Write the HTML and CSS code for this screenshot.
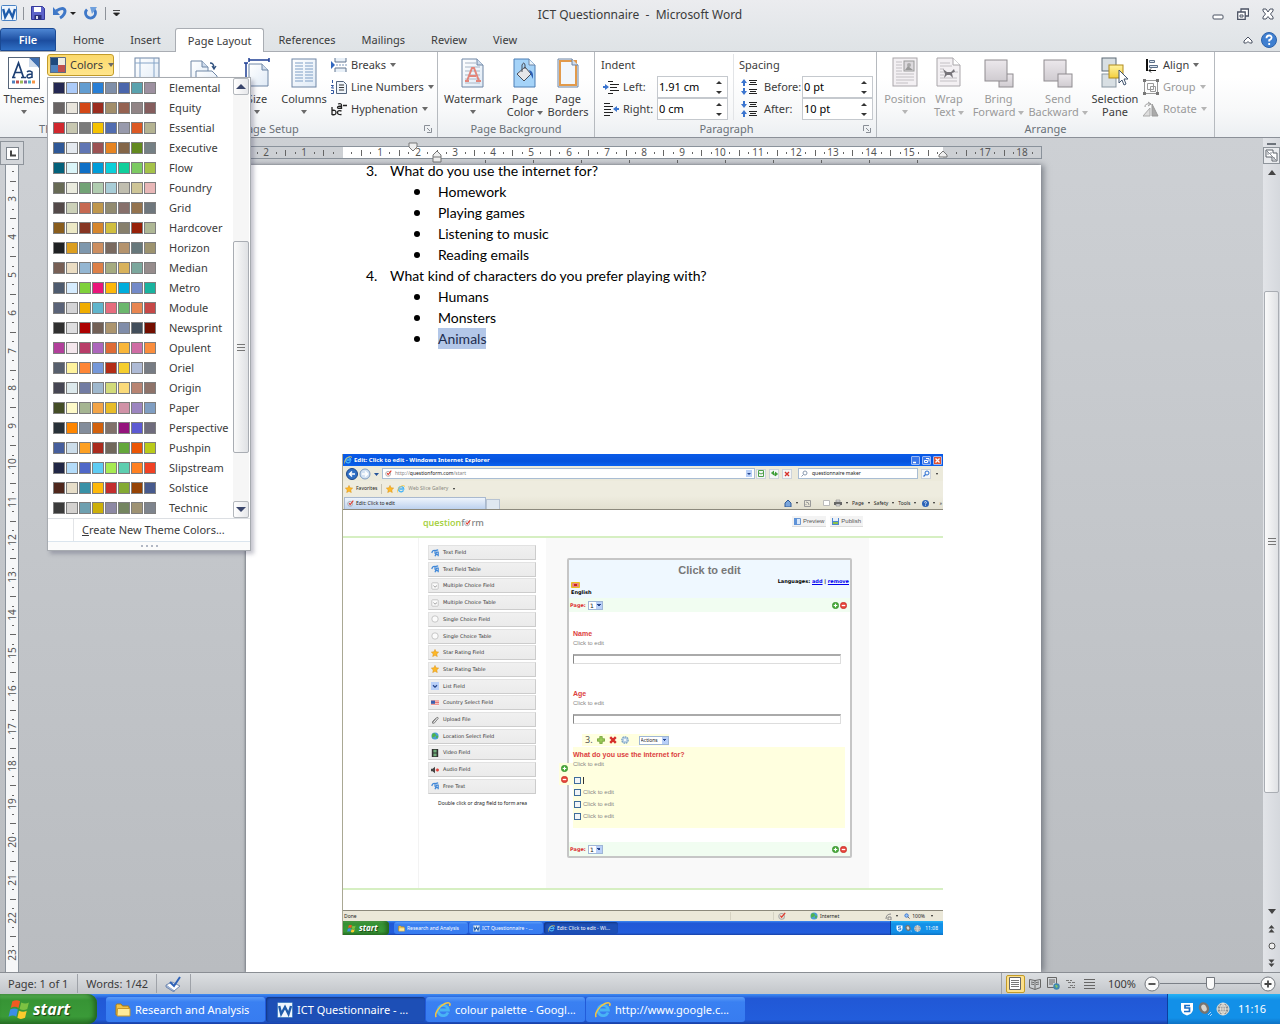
FILE: index.html
```html
<!DOCTYPE html>
<html lang="en">
<head>
<meta charset="utf-8">
<title>ICT Questionnaire - Microsoft Word</title>
<link rel="stylesheet" href="styles.css">
</head>
<body>
<svg class="defs" aria-hidden="true">
  <defs>
    <linearGradient id="pg" x1="0" y1="0" x2="1" y2="1"><stop offset="0" stop-color="#fff"/><stop offset="1" stop-color="#dfeaf6"/></linearGradient>
    <linearGradient id="gg" x1="0" y1="0" x2="0" y2="1"><stop offset="0" stop-color="#ece8ec"/><stop offset="1" stop-color="#cfcbd0"/></linearGradient>
    <linearGradient id="yg" x1="0" y1="0" x2="0" y2="1"><stop offset="0" stop-color="#fff3a0"/><stop offset="1" stop-color="#f4cf3e"/></linearGradient>
    <symbol id="ie" viewBox="0 0 16 16"><path d="M13 10.500A5.200 5.200 0 1 1 13.400 8H5" fill="none" stroke="#49b4f5" stroke-width="2.800"/><path d="M1.200 15C-1 12 4 4 10 1.500C14 0 16 1 14.500 4" fill="none" stroke="#f5c542" stroke-width="1.500"/></symbol>
    <symbol id="folder" viewBox="0 0 16 16"><path d="M1 3.500q0-1.500 1.500-1.500H6l1.500 2H13q1 0 1 1v8H1z" fill="#f0c34a" stroke="#a87a14"/><path d="M2.500 6.500h12.500v7.500H2z" fill="#ffeb9a" stroke="#c6982c"/></symbol>
    <symbol id="word" viewBox="0 0 16 16"><rect x=".5" y=".5" width="15" height="15" rx="1" fill="#eef5fd" stroke="#4b83c4"/><path d="M2.200 4l2 8L8 5l3.500 7 2.500-8" fill="none" stroke="#1f5cab" stroke-width="2.400"/></symbol>
    <symbol id="flag" viewBox="0 0 20 20"><path d="M4 3q4-2 7 0L9.500 9Q6 7 2.500 9z" fill="#f25a22"/><path d="M12 4q4 2 7 0l-1.500 6q-3.500 2-7 0z" fill="#7cc142"/><path d="M2 10.500q4-2 7 0L7.500 17q-3-2-7 0z" fill="#3b8ee8"/><path d="M10 11.500q4 2 7 0L15.500 18q-4 2-7 0z" fill="#fbcb2d"/></symbol>
    <symbol id="add" viewBox="0 0 10 10"><circle cx="5" cy="5" r="4.500" fill="#4caf3e" stroke="#3a8a30"/><path d="M5 2.500v5M2.500 5h5" stroke="#fff" stroke-width="1.600"/></symbol>
    <symbol id="del" viewBox="0 0 10 10"><circle cx="5" cy="5" r="4.500" fill="#e8453c" stroke="#c23028"/><path d="M2.500 5h5" stroke="#fff" stroke-width="1.800"/></symbol>
    <symbol id="star" viewBox="0 0 10 10"><path d="M5 .5l1.400 3 3.200.4-2.400 2.300.7 3.300L5 7.900 2.100 9.500l.7-3.300L.4 3.900l3.200-.4z" fill="#fdb827" stroke="#d98f13" stroke-width=".6"/></symbol>
    <symbol id="textf" viewBox="0 0 10 10"><path d="M1 5q1-4 4-3v4M5 2l4-1M5 9l2-5h2v5M6 7h3" fill="none" stroke="#3f87d8" stroke-width="1.500"/></symbol>
    <symbol id="chk" viewBox="0 0 10 10"><rect x="1" y="1" width="8" height="8" rx="1" fill="#fbfbfb" stroke="#bbb"/><path d="M3 4.500l2 2 2.500-2" fill="none" stroke="#888"/></symbol>
    <symbol id="rad" viewBox="0 0 10 10"><circle cx="5" cy="5" r="4" fill="#fbfbfb" stroke="#bbb"/></symbol>
    <symbol id="globe" viewBox="0 0 10 10"><circle cx="5" cy="5" r="4.500" fill="#4a9fd8"/><path d="M2 2q3-1 4 1T4 6 3 9Q0 6 2 2zM7 4l2 1-1 3-2-1z" fill="#4fb34a"/></symbol>
    <symbol id="qf" viewBox="0 0 10 10"><circle cx="4.500" cy="5.500" r="3.500" fill="none" stroke="#aaa" stroke-width="1.300"/><path d="M3 4.500l1.500 2L9 1" fill="none" stroke="#e03a2f" stroke-width="1.500"/></symbol>
    <symbol id="shield" viewBox="0 0 14 14"><path d="M1 1h12v7q-1 4-6 5.500Q2 12 1 8z" fill="#fff"/><path d="M10 3.500H5V6h4.500v3.500H4" fill="none" stroke="#1b6fc8" stroke-width="1.700"/></symbol>
    <symbol id="speaker" viewBox="0 0 14 14"><ellipse cx="6" cy="6" rx="5" ry="6" fill="#77746f" transform="rotate(-25 6 6)"/><ellipse cx="6" cy="6" rx="2.500" ry="3.500" fill="#d9d6cf" transform="rotate(-25 6 6)"/><path d="M10 13l3-3M12 14l2-2" stroke="#a6d2ff"/></symbol>
    <symbol id="net" viewBox="0 0 14 14"><circle cx="7" cy="7" r="6" fill="#8b8f92" stroke="#e6e3da"/><path d="M1 7h12M7 1v12M2.500 4h9M2.500 10h9M7 1q-5 6 0 12M7 1q5 6 0 12" fill="none" stroke="#e6e3da"/></symbol>
  </defs>
</svg>

<header class="titlebar">
  <div class="qat">
    <svg width="16" height="16" role="img" aria-label="Word"><use href="#word"/></svg>
    <i class="qat-line"></i>
    <button aria-label="Save"><svg width="14" height="14" viewBox="0 0 14 14"><path d="M.5.5h11l2 2v11H.5z" fill="#5c62c9" stroke="#34389a"/><path d="M3 1h7v5H3z" fill="#fff"/><path d="M3.500 9h7v4.500h-7z" fill="#2a2e78"/><path d="M5 10h2v3H5z" fill="#dde"/></svg></button>
    <button aria-label="Undo"><svg width="23" height="15" viewBox="0 0 23 15"><path d="M3 5q8-5 9 0 0 4-5 7" fill="none" stroke="#3f78c8" stroke-width="3"/><path d="M0 1v8h7z" fill="#3f78c8"/><path d="M17 6h6l-3 3z" fill="#222"/></svg></button>
    <button aria-label="Redo"><svg width="14" height="15" viewBox="0 0 14 15"><path d="M3 3.500a5 5 0 1 0 7 0" fill="none" stroke="#3f78c8" stroke-width="2.800"/><path d="M6 1h7l-5 7z" fill="#6fa0dd"/></svg></button>
    <i class="qat-line"></i>
    <button aria-label="Customize"><svg width="7" height="7" viewBox="0 0 7 7"><path d="M0 .5h7M.5 3h6L3.500 6z" fill="#222" stroke="#222" stroke-width=".8"/></svg></button>
  </div>
  <h1>ICT Questionnaire&nbsp; -&nbsp; Microsoft Word</h1>
  <div class="winbtns">
    <button aria-label="Minimize"><svg width="12" height="12" viewBox="0 0 12 12"><rect x="1" y="7" width="10" height="4" rx="1" fill="#fff" stroke="#4b5263"/></svg></button>
    <button aria-label="Restore"><svg width="12" height="12" viewBox="0 0 12 12"><path d="M4 1h7.500v7H4z" fill="#fff" stroke="#4b5263" stroke-width="1.300"/><path d="M.7 4h7.500v7.300H.7z" fill="#fff" stroke="#4b5263" stroke-width="1.300"/><path d="M3 7h3v2H3z" fill="none" stroke="#4b5263"/></svg></button>
    <button aria-label="Close"><svg width="12" height="12" viewBox="0 0 12 12"><path d="M1 1h3l2 3 2-3h3v2L8.500 6 11 9v2H8L6 8.500 4 11H1V9l2.500-3L1 3z" fill="#fff" stroke="#4b5263"/></svg></button>
  </div>
</header>

<nav class="tabs">
  <button class="file">File</button>
  <button>Home</button>
  <button>Insert</button>
  <button class="on">Page Layout</button>
  <button>References</button>
  <button>Mailings</button>
  <button>Review</button>
  <button>View</button>
  <div class="help">
    <button aria-label="Minimize the Ribbon"><svg width="10" height="8" viewBox="0 0 10 8"><path d="M1 5l4-4 4 4v2H6.500L5 5.500 3.500 7H1z" fill="#fff" stroke="#4b5263"/></svg></button>
    <button aria-label="Help"><svg width="16" height="16" viewBox="0 0 16 16"><circle cx="8" cy="8" r="7.500" fill="#3f7fd0" stroke="#2c62aa"/><path d="M5.500 6.200q0-2.700 2.600-2.700t2.500 2.300Q10.500 7.200 8.200 8.200V9.500M8.200 11v2" fill="none" stroke="#fff" stroke-width="1.800"/></svg></button>
  </div>
</nav>

<section class="ribbon">
  <div class="group themes">
    <div class="tools">
      <button class="big"><svg width="32" height="32" viewBox="0 0 32 32"><rect x=".5" y=".5" width="31" height="31" fill="#fff" stroke="#566579"/><path d="M21 1h10v10z" fill="#3f6fb0"/><path d="M21 1v9h9z" fill="#cfdcec"/><path d="M5 20.500L10.500 6l5 14.500M7 15.500h7M4 20.500h3.500M13 20.500h5" fill="none" stroke="#1d3f73" stroke-width="1.700"/><path d="M19 15q2-2 5 0v6M24 17q-5 0-5 2.500t5 .5" fill="none" stroke="#1d3f73" stroke-width="1.500"/><path d="M4 23.500h3v3H4z" fill="#4f81bd"/><path d="M8 23.500h3v3H8z" fill="#c0504d"/><path d="M12 23.500h3v3h-3z" fill="#9bbb59"/><path d="M16 23.500h3v3h-3z" fill="#8064a2"/><path d="M20 23.500h3v3h-3z" fill="#4bacc6"/><path d="M24 23.500h3v3h-3z" fill="#f79646"/></svg><span>Themes</span><i class="dd"></i></button>
      <div class="colors-wrap">
        <button class="colors" aria-expanded="true"><svg width="16" height="16" viewBox="0 0 16 16"><path d="M0 0h8v8H0z" fill="#1f497d"/><path d="M8 0h8v8H8z" fill="#eeece1"/><path d="M0 8h8v8H0z" fill="#4f81bd"/><path d="M8 8h8v8H8z" fill="#c0504d"/><path d="M.5.5h15v15H.500z" fill="none" stroke="#5d6c82"/></svg><span>Colors</span><i class="dd"></i></button>
        <div class="menu">
          <div class="menu-main">
            <ul id="schemes"></ul>
            <div class="menu-scroll">
              <button aria-label="Scroll up"><i class="tri-up"></i></button>
              <div class="menu-thumb"><i></i><i></i><i></i></div>
              <button aria-label="Scroll down"><i class="tri-down"></i></button>
            </div>
          </div>
          <button class="create"><span><u>C</u>reate New Theme Colors...</span></button>
          <div class="grip"><i></i><i></i><i></i><i></i></div>
        </div>
      </div>
    </div>
    <h2>Themes</h2>
  </div>

  <div class="group setup">
    <div class="tools">
      <button class="big w44" aria-label="Margins"><svg width="26" height="32" viewBox="0 0 26 32"><rect x="1" y="1" width="24" height="30" fill="url(#pg)" stroke="#6f86a5"/><path d="M6 1v30M20 1v30M1 6h24M1 26h24" stroke="#86a5c8"/></svg></button>
      <button class="big w66" aria-label="Orientation"><svg width="32" height="32" viewBox="0 0 32 32"><path d="M5 4h11l6 6v20H5z" fill="url(#pg)" stroke="#6f86a5"/><path d="M16 4v6h6" fill="#cfdcec" stroke="#6f86a5"/><path d="M10 14h16l5 5v12H10z" fill="url(#pg)" stroke="#6f86a5"/><path d="M24 6q4 0 4 5M26 9l2 3 2-3" fill="none" stroke="#30517f" stroke-width="1.300"/></svg></button>
      <button class="big w44"><svg width="26" height="32" viewBox="0 0 26 32"><path d="M5 7h13l6 6v16H5z" fill="url(#pg)" stroke="#6f86a5"/><path d="M18 7v6h6" fill="#cfdcec" stroke="#6f86a5"/><path d="M5 3h20M5 1v4M25 1v4M2 6v23M0 6h4" stroke="#1f3f94" stroke-width="1.500"/></svg><span>Size</span><i class="dd"></i></button>
      <button class="big w50"><svg width="26" height="32" viewBox="0 0 26 32"><rect x="1" y="2" width="24" height="28" fill="url(#pg)" stroke="#6f86a5"/><path d="M4 6h8M4 9h8M4 12h8M4 15h8M4 18h8M4 21h8M4 24h8M14 6h8M14 9h8M14 12h8M14 15h8M14 18h8M14 21h8M14 24h8" stroke="#7f9fc6"/></svg><span>Columns</span><i class="dd"></i></button>
      <div class="stack">
        <button><svg width="16" height="16" viewBox="0 0 16 16"><path d="M4 1v4h11V1M4 15v-4h11v4" fill="#e8f0f8" stroke="#60758f"/><path d="M5 8h11" stroke="#7d97ba" stroke-dasharray="2 1"/><path d="M0 4l4 4-4 4z" fill="#2f66bf"/></svg><span>Breaks</span><i class="dd"></i></button>
        <button><svg width="16" height="16" viewBox="0 0 16 16"><path d="M5.500 2.500h7l3 3v9h-10z" fill="#eef4fa" stroke="#51637b"/><path d="M8 6h5M8 8.500h5M8 11h5" stroke="#333"/><path d="M1.500 1v3M0 6.500h2.500L.5 9H3M0 11.500h2.500v3H0" fill="none" stroke="#2f56a0"/></svg><span>Line Numbers</span><i class="dd"></i></button>
        <button><svg width="16" height="16" viewBox="0 0 16 16"><path d="M1 6v8M1 9.500q4-1 4 2t-4 2M10.500 10q-4-1-4 1.500t4 2M7 3q3.500-1 3.500 1v4M10.500 5q-4 0-4 1.500t4 .5M12 4.500h4" fill="none" stroke="#222" stroke-width="1.300"/></svg><span>Hyphenation</span><i class="dd"></i></button>
      </div>
    </div>
    <h2>Page Setup</h2><button class="launch" aria-label="Page Setup options"><svg width="8" height="8" viewBox="0 0 8 8"><path d="M.5 6V.5H6M3 3l3 3M7.500 3v4.500H3" fill="none" stroke="#8a8f97"/></svg></button>
  </div>

  <div class="group bg">
    <div class="tools">
      <button class="big w60"><svg width="24" height="32" viewBox="0 0 24 32"><path d="M1 2h15l6 6v22H1z" fill="url(#pg)" stroke="#6f86a5"/><path d="M4 6h11M4 10h15M4 14h15M4 18h15M4 22h15M4 26h15" stroke="#a9b6c6"/><path d="M6 24l5-13h2l5 13M8 19h7M4 24h4M15 24h5" fill="none" stroke="#e2857a" stroke-width="2"/><path d="M16 2v6h6" fill="#cfdcec" stroke="#6f86a5"/></svg><span>Watermark</span><i class="dd"></i></button>
      <button class="big w44"><svg width="24" height="32" viewBox="0 0 24 32"><path d="M1 2h15l6 6v22H1z" fill="#a5d3f8" stroke="#4d7fb5"/><path d="M16 2v6h6" fill="#eaf3fb" stroke="#6f86a5"/><path d="M4 17l8-7 6 7-7 7z" fill="#e6e6e8" stroke="#4b4f58"/><path d="M9 15V8q2-4 3 0v4" fill="none" stroke="#4b4f58"/><path d="M16 13q5 1 4 9l-2-4z" fill="#2c5fb5"/></svg><span>Page<br>Color <i class="dd"></i></span></button>
      <button class="big w42"><svg width="24" height="32" viewBox="0 0 24 32"><path d="M2 2h14l6 6v22H2z" fill="#f2f7fc" stroke="#6f86a5"/><path d="M4 4h16v24H4z" fill="none" stroke="#e29a4b" stroke-width="2"/><path d="M16 2v6h6" fill="#cfdcec" stroke="#6f86a5"/></svg><span>Page<br>Borders</span></button>
    </div>
    <h2>Page Background</h2>
  </div>

  <div class="group para">
    <div class="tools">
      <div class="fields">
        <h3>Indent</h3>
        <svg width="16" height="16" viewBox="0 0 16 16"><path d="M5 2.500h5M7 5.500h9M7 8.500h7M7 11.500h9M5 14.500h5" stroke="#222"/><path d="M0 7h2V5l4 3-4 3V9H0z" fill="#3a74cf"/></svg>
        <label for="il">Left:</label><span class="spin"><input id="il" value="1.91 cm"><i class="ud"></i></span>
        <svg width="16" height="16" viewBox="0 0 16 16"><path d="M1 2.500h6M1 5.500h9M1 8.500h7M1 11.500h9M1 14.500h6" stroke="#222"/><path d="M16 7h-2V5l-4 3 4 3V9h2z" fill="#3a74cf"/></svg>
        <label for="ir">Right:</label><span class="spin"><input id="ir" value="0 cm"><i class="ud"></i></span>
      </div>
      <div class="fields sp">
        <h3>Spacing</h3>
        <svg width="16" height="16" viewBox="0 0 16 16"><path d="M8 1.500h8M9 3.500h6M8 5.500h8M8 10.500h8M9 12.500h6M8 14.500h8" stroke="#222"/><path d="M3 0l3 4H4v3H2V4H0zM3 16l3-4H4V9H2v3H0z" fill="#3a74cf"/></svg>
        <label for="sb">Before:</label><span class="spin"><input id="sb" value="0 pt"><i class="ud"></i></span>
        <svg width="16" height="16" viewBox="0 0 16 16"><path d="M8 1.500h8M9 3.500h6M8 5.500h8M8 10.500h8M9 12.500h6M8 14.500h8" stroke="#222"/><path d="M3 7l3-4H4V0H2v3H0zM3 9l3 4H4v3H2v-3H0z" fill="#3a74cf"/></svg>
        <label for="sa">After:</label><span class="spin"><input id="sa" value="10 pt"><i class="ud"></i></span>
      </div>
    </div>
    <h2>Paragraph</h2><button class="launch" aria-label="Paragraph options"><svg width="8" height="8" viewBox="0 0 8 8"><path d="M.5 6V.5H6M3 3l3 3M7.500 3v4.500H3" fill="none" stroke="#8a8f97"/></svg></button>
  </div>

  <div class="group arrange">
    <div class="tools">
      <button class="big off w46"><svg width="26" height="32" viewBox="0 0 26 32"><rect x="1" y="1" width="24" height="28" fill="#f3f0f3" stroke="#a9a6aa"/><path d="M4 5h6M4 8h6M4 11h6M4 14h6M4 17h18M4 20h18M4 23h18M4 26h12" stroke="#c3c0c4"/><rect x="12" y="4" width="10" height="10" fill="#dcd9dd" stroke="#999"/><circle cx="17" cy="8" r="2" fill="#aaa"/><path d="M13 13l3-4 5 4" fill="#999"/></svg><span>Position</span><i class="dd"></i></button>
      <button class="big off w42"><svg width="26" height="32" viewBox="0 0 26 32"><path d="M1 1h16l7 7v21H1z" fill="#f3f0f3" stroke="#a9a6aa"/><path d="M17 1v7h7" fill="#fff" stroke="#a9a6aa"/><path d="M4 6h10M4 9h12M4 12h4M4 15h4M4 18h4M4 21h17M4 24h17M19 15h3" stroke="#c3c0c4"/><path d="M7 12l4 3h4l3-3 1 3-3 1 1 5-3-3h-3l-3 3 1-4z" fill="#77747a"/></svg><span>Wrap<br>Text <i class="dd"></i></span></button>
      <button class="big off w57"><svg width="30" height="32" viewBox="0 0 30 32"><rect x="15" y="17" width="14" height="13" fill="url(#gg)" stroke="#8f8c90"/><rect x="1" y="3" width="22" height="21" fill="url(#gg)" stroke="#8f8c90"/></svg><span>Bring<br>Forward <i class="dd"></i></span></button>
      <button class="big off w62"><svg width="30" height="32" viewBox="0 0 30 32"><rect x="1" y="3" width="22" height="21" fill="url(#gg)" stroke="#8f8c90"/><rect x="15" y="17" width="14" height="13" fill="url(#gg)" stroke="#8f8c90"/></svg><span>Send<br>Backward <i class="dd"></i></span></button>
      <button class="big w52"><svg width="28" height="32" viewBox="0 0 28 32"><rect x="1" y="1" width="14" height="13" fill="#d8dfe3" stroke="#5c6a76"/><rect x="1" y="17" width="14" height="13" fill="#d8dfe3" stroke="#8a97a2"/><rect x="8" y="8" width="14" height="13" fill="url(#yg)" stroke="#b08a1c"/><path d="M18 13v13l3-3 2 5 2-1-2-5h4z" fill="#fff" stroke="#41556f"/></svg><span>Selection<br>Pane</span></button>
      <div class="stack">
        <button><svg width="16" height="16" viewBox="0 0 16 16"><path d="M4 2v12" stroke="#111" stroke-width="2"/><path d="M6.500 3.500h5v2h-5zM6.500 8.500h8v2h-8z" fill="#dbe6f2" stroke="#5b6e88"/><path d="M6 13.500h7M6 13.500l2-2M6 13.500l2 2" stroke="#111"/></svg><span>Align</span><i class="dd"></i></button>
        <button class="off"><svg width="16" height="16" viewBox="0 0 16 16"><path d="M1.500 1.500h13v13h-13zM4.500 4.500h6v6h-6zM7.500 7.500h5v5h-5z" fill="none" stroke="#999"/><path d="M0 0h3v3H0zM13 0h3v3h-3zM0 13h3v3H0zM13 13h3v3h-3z" fill="#777"/></svg><span>Group</span><i class="dd"></i></button>
        <button class="off"><svg width="16" height="16" viewBox="0 0 16 16"><path d="M0 15h7V7z" fill="#ddd" stroke="#aaa"/><path d="M9 15V3l6 12z" fill="#aaa" stroke="#999"/><path d="M2 6q0-4 5-3M5 1l3 2-3 2" fill="none" stroke="#999"/></svg><span>Rotate</span><i class="dd"></i></button>
      </div>
    </div>
    <h2>Arrange</h2>
  </div>
</section>

<main class="work">
  <div class="left">
    <button class="tabsel" aria-label="Left tab"><svg width="13" height="13" viewBox="0 0 13 13"><rect x=".5" y=".5" width="12" height="12" fill="#fff" stroke="#7d848c"/><path d="M5 3.500v5h5" fill="none" stroke="#444" stroke-width="2"/></svg></button>
    <div class="vruler" id="vruler"></div>
  </div>
  <div class="center">
    <div class="hruler" id="hruler"></div>
    <article class="page">
      <ol class="doc">
        <li><div class="q"><span class="n">3.</span><span>What do you use the internet for?</span></div>
          <ul><li>Homework</li><li>Playing games</li><li>Listening to music</li><li>Reading emails</li></ul></li>
        <li><div class="q"><span class="n">4.</span><span>What kind of characters do you prefer playing with?</span></div>
          <ul><li>Humans</li><li>Monsters</li><li><mark>Animals</mark></li></ul></li>
      </ol>

      <figure class="shot">
        <div class="ie-title"><svg width="8" height="8"><use href="#ie"/></svg><b>Edit: Click to edit - Windows Internet Explorer</b>
          <button aria-label="Minimize"><svg width="7" height="7" viewBox="0 0 7 7"><path d="M1 5.500h3" stroke="#fff" stroke-width="1.500"/></svg></button><button aria-label="Restore"><svg width="7" height="7" viewBox="0 0 7 7"><path d="M3 1.500h3v3M1.500 3.500h3v2h-3z" fill="none" stroke="#fff"/></svg></button><button class="x" aria-label="Close"><svg width="7" height="7" viewBox="0 0 7 7"><path d="M1.500 1.500l4 4M5.500 1.500l-4 4" stroke="#fff" stroke-width="1.300"/></svg></button></div>
        <div class="ie-addr">
          <svg width="34" height="14" viewBox="0 0 34 14"><circle cx="7" cy="7" r="5.500" fill="#2f6fc4" stroke="#1c4688"/><path d="M10 7H4.500M7 4.500L4.500 7 7 9.500" fill="none" stroke="#fff" stroke-width="1.500"/><circle cx="20" cy="7" r="5" fill="#d3e2f2" stroke="#7f9cc0"/><path d="M17 7h5.500M20 4.500L22.500 7 20 9.500" fill="none" stroke="#fff" stroke-width="1.500"/><path d="M29 6h5l-2.500 3z" fill="#24539b"/></svg>
          <div class="url"><svg width="7" height="7"><use href="#qf"/></svg><span>http://<b>questionform.com</b>/start</span><i class="mini-dd"></i></div>
          <button aria-label="Compatibility"><svg width="6" height="7" viewBox="0 0 6 7"><path d="M.5.5h5v6h-5zM1 3l2 1 2-1" fill="none" stroke="#4fa04a"/></svg></button>
          <button aria-label="Refresh"><svg width="7" height="7" viewBox="0 0 7 7"><path d="M3 1L.500 3 3 5V3M4 2l2.500 2L4 6V4" fill="#3b9c35" stroke="#3b9c35"/></svg></button>
          <button aria-label="Stop"><svg width="6" height="6" viewBox="0 0 6 6"><path d="M1 1l4 4M5 1L1 5" stroke="#d8322a" stroke-width="1.400"/></svg></button>
          <div class="search"><svg width="7" height="7" viewBox="0 0 7 7"><circle cx="4" cy="3" r="2" fill="none" stroke="#8b9bb0"/><path d="M2.500 4.500L.5 6.500" stroke="#8b9bb0"/></svg><span>questionnaire maker</span></div>
          <button aria-label="Search"><svg width="7" height="7" viewBox="0 0 7 7"><circle cx="4" cy="3" r="2" fill="none" stroke="#2d6fd2"/><path d="M2.500 4.500L.5 6.500" stroke="#2d6fd2" stroke-width="1.300"/></svg></button>
          <i class="mini-tri"></i>
        </div>
        <div class="ie-fav"><svg width="8" height="8"><use href="#star"/></svg><span>Favorites</span><i class="vl"></i><svg width="8" height="8"><use href="#star"/></svg><svg width="8" height="8"><use href="#ie"/></svg><span class="dim">Web Slice Gallery</span><i class="mini-tri"></i></div>
        <div class="ie-tabs"><div class="ie-tab"><svg width="7" height="7"><use href="#qf"/></svg><span>Edit: Click to edit</span></div><div class="ie-newtab"></div>
          <div class="ie-cmds">
            <svg width="8" height="8" viewBox="0 0 8 8"><path d="M1 4l3-3 3 3v4H1z" fill="#7aa5dc" stroke="#315b95"/></svg><i class="mini-tri"></i>
            <svg width="7" height="7" viewBox="0 0 7 7"><path d="M.5.5h6v6h-6zM2 5V4M2 2q3 0 3 3" fill="none" stroke="#999"/></svg><i class="gap"></i>
            <svg width="7" height="6" viewBox="0 0 7 6"><path d="M.5.5h6v5h-6z" fill="#fff" stroke="#bbb"/></svg>
            <svg width="8" height="8" viewBox="0 0 8 8"><path d="M0 3h8v3H0z" fill="#666"/><path d="M2 1h4v2H2zM2 5h4v2H2z" fill="#ddd" stroke="#777" stroke-width=".5"/></svg><i class="mini-tri"></i>
            <span>Page</span><i class="mini-tri"></i><span>Safety</span><i class="mini-tri"></i><span>Tools</span><i class="mini-tri"></i>
            <svg width="7" height="7" viewBox="0 0 16 16"><circle cx="8" cy="8" r="8" fill="#2a62b8"/><path d="M6 6q0-3 2-2.500t2 2T8 9v1M8 11v2" fill="none" stroke="#fff" stroke-width="1.800"/></svg><i class="mini-tri"></i><span>»</span>
          </div></div>

        <div class="site-head">
          <div class="logo"><span>question</span><b>f</b><svg width="7" height="8" viewBox="0 0 10 10"><use href="#qf"/></svg><b>rm</b></div>
          <div class="site-btns"><button><svg width="7" height="7" viewBox="0 0 7 7"><path d="M.5.500h6v6h-6z" fill="#dbe9fa" stroke="#6f9ad3"/><path d="M0 0h3v7H0z" fill="#5f93d8"/></svg>Preview</button><button><svg width="7" height="7" viewBox="0 0 7 7"><path d="M0 0h7v7H0z" fill="#4d86d0"/><path d="M1 0h5v3H1z" fill="#e8f0fa"/><path d="M1 4h5v2H1z" fill="#8bc34a"/></svg>Publish</button></div>
        </div>
        <div class="site-body">
          <aside class="palette">
            <div class="pal-list">
              <button><svg><use href="#textf"/></svg>Text Field</button>
              <button><svg><use href="#textf"/></svg>Text Field Table</button>
              <button><svg><use href="#chk"/></svg>Multiple Choice Field</button>
              <button><svg><use href="#chk"/></svg>Multiple Choice Table</button>
              <button><svg><use href="#rad"/></svg>Single Choice Field</button>
              <button><svg><use href="#rad"/></svg>Single Choice Table</button>
              <button><svg><use href="#star"/></svg>Star Rating Field</button>
              <button><svg><use href="#star"/></svg>Star Rating Table</button>
              <button><svg viewBox="0 0 10 10"><path d="M0 0h10v10H0z" fill="#b9d0f8"/><path d="M2.500 4L5 6.500 7.500 4" fill="none" stroke="#27468c" stroke-width="1.600"/></svg>List Field</button>
              <button><svg viewBox="0 0 10 10"><path d="M0 2h10v6H0z" fill="#fff"/><path d="M0 2.500h10M0 4.500h10M0 6.500h10" stroke="#e0443c"/><path d="M0 2h5v4H0z" fill="#3c5fae"/></svg>Country Select Field</button>
              <button><svg viewBox="0 0 10 10"><path d="M2 8l5-6q2-1 2 1L4 9q-3 1-2-2l4-4" fill="none" stroke="#666"/></svg>Upload File</button>
              <button><svg><use href="#globe"/></svg>Location Select Field</button>
              <button><svg viewBox="0 0 10 10"><path d="M1 0h8v10H1z" fill="#333"/><path d="M3 1h4v3.500H3zM3 5.500h4V9H3z" fill="#6fae7a"/></svg>Video Field</button>
              <button><svg viewBox="0 0 10 10"><path d="M0 3.500h2L5 1v8L2 6.500H0z" fill="#444"/><path d="M6 5h4M8 3v4" stroke="#e0443c" stroke-width="2"/></svg>Audio Field</button>
              <button><svg><use href="#textf"/></svg>Free Text</button>
            </div>
            <p>Double click or drag field to form area</p>
          </aside>
          <div class="canvas">
            <div class="form">
              <div class="f-head"><h4>Click to edit</h4><p class="lang">Languages: <a href="#add">add</a> | <a href="#remove">remove</a></p>
                <div class="eng"><svg width="9" height="6" viewBox="0 0 9 6"><path d="M.5.5h8v5h-8z" fill="#e88a7a" stroke="#e8c21c"/><path d="M3 2h3v2H3z" fill="#c22"/></svg><b>English</b></div></div>
              <div class="f-page"><label for="p1">Page:</label><select id="p1"><option>1</option></select><svg><use href="#add"/></svg><svg><use href="#del"/></svg></div>
              <div class="f-field"><label for="fn">Name</label><small>Click to edit</small><input id="fn"></div>
              <div class="f-field"><label for="fa">Age</label><small>Click to edit</small><input id="fa"></div>
              <div class="f-bar"><b>3.</b>
                <svg viewBox="0 0 10 10"><path d="M3.500.5h3v3h3v3h-3v3h-3v-3h-3v-3h3z" fill="#9ccb5a" stroke="#6a9c30"/></svg>
                <svg viewBox="0 0 10 10"><path d="M1.500 1.500l7 7M8.500 1.500l-7 7" stroke="#d62f2a" stroke-width="3"/></svg>
                <svg viewBox="0 0 10 10"><circle cx="5" cy="5" r="4" fill="#b8d0e4" stroke="#7ba2c2" stroke-width="1.600" stroke-dasharray="2 1"/><circle cx="5" cy="5" r="1.400" fill="#fff"/></svg>
                <select aria-label="Actions"><option>Actions</option></select></div>
              <div class="f-q">
                <div class="pm"><svg><use href="#add"/></svg><svg><use href="#del"/></svg></div>
                <h5>What do you use the internet for?</h5><small>Click to edit</small>
                <label class="o"><input type="checkbox"><i class="caret"></i></label>
                <label class="o"><input type="checkbox">Click to edit</label>
                <label class="o"><input type="checkbox">Click to edit</label>
                <label class="o"><input type="checkbox">Click to edit</label>
              </div>
              <div class="f-page end"><label for="p2">Page:</label><select id="p2"><option>1</option></select><svg><use href="#add"/></svg><svg><use href="#del"/></svg></div>
            </div>
          </div>
        </div>
        <div class="site-foot"></div>
        <div class="ie-status"><span>Done</span><i class="cells"></i><svg width="8" height="8"><use href="#qf"/></svg><span class="zone"><svg width="8" height="8"><use href="#globe"/></svg>Internet</span><span class="zoomv"><svg width="7" height="7" viewBox="0 0 7 7"><path d="M1 6q0-5 5-5M3 4h3v3H3z" fill="none" stroke="#888"/></svg><i class="mini-tri"></i></span><span><svg width="6" height="6" viewBox="0 0 7 7"><circle cx="3" cy="3" r="2" fill="#9cc4f2" stroke="#2d6fd2"/><path d="M4.500 4.500l2 2" stroke="#555"/></svg>100%</span><i class="mini-tri"></i></div>
        <div class="xp mini">
          <button class="start"><svg width="9" height="9"><use href="#flag"/></svg>start</button>
          <button class="task"><svg><use href="#folder"/></svg>Research and Analysis</button>
          <button class="task"><svg><use href="#word"/></svg>ICT Questionnaire - ...</button>
          <button class="task on"><svg><use href="#ie"/></svg>Edit: Click to edit - Wi...</button>
          <div class="tray"><svg><use href="#shield"/></svg><svg><use href="#speaker"/></svg><svg><use href="#net"/></svg><span>11:08</span></div>
        </div>
      </figure>
    </article>
  </div>
  <div class="vscroll">
    <i class="split"></i>
    <button class="rt" aria-label="View Ruler"><svg width="13" height="13" viewBox="0 0 13 13"><path d="M1 1h7v3h4v8H7V8H1z" fill="#fff" stroke="#5d636b"/><path d="M2 2l9 9M3 6V3M6 3v2M9 8v3" stroke="#8a8f97"/></svg></button>
    <button aria-label="Scroll up"><i class="tri-up"></i></button>
    <div class="track"><div class="thumb"><i></i><i></i><i></i></div></div>
    <button aria-label="Scroll down"><i class="tri-down"></i></button>
    <button aria-label="Previous page"><svg width="7" height="8" viewBox="0 0 7 8"><path d="M3.500 0L6.500 3.500h-6zM3.500 4l3 3.500h-6z" fill="#444"/></svg></button>
    <button aria-label="Browse object"><svg width="8" height="8" viewBox="0 0 8 8"><circle cx="4" cy="4" r="3" fill="#eee" stroke="#555"/></svg></button>
    <button aria-label="Next page"><svg width="7" height="8" viewBox="0 0 7 8"><path d="M3.500 4L6.500 .5h-6zM3.500 8l3-3.500h-6z" fill="#444"/></svg></button>
  </div>
</main>

<footer class="status">
  <span class="cell">Page: 1 of 1</span>
  <span class="cell">Words: 1/42</span>
  <span class="cell"><svg width="17" height="16" viewBox="0 0 17 16"><path d="M1 9l6-3 8 4-6 5z" fill="#fff" stroke="#7189b0"/><path d="M1 9v2l8 5v-2" fill="#9fb4d6" stroke="#7189b0"/><path d="M5 6l4 4 6-9" fill="none" stroke="#2e62b8" stroke-width="2"/></svg></span>
  <div class="views">
    <button class="on" aria-label="Print Layout"><svg width="12" height="13" viewBox="0 0 12 13"><path d="M.5.5h11v12H.5z" fill="#fff" stroke="#666"/><path d="M2 3.500h8M2 5.500h8M2 7.500h8M2 9.500h8" stroke="#777"/></svg></button>
    <button aria-label="Full Screen Reading"><svg width="12" height="12" viewBox="0 0 12 12"><path d="M.5 1.500l5.500 1 5.500-1v8l-5.500 2-5.500-2zM6 2v9M2 4l3 .5M2 6l3 .5M7 4.500l3-.5M7 6.500l3-.5" fill="none" stroke="#666"/></svg></button>
    <button aria-label="Web Layout"><svg width="13" height="13" viewBox="0 0 13 13"><path d="M.5.5h9v10h-9zM2 3h6M2 5h6M2 7h4" fill="none" stroke="#666"/><circle cx="9.500" cy="9.500" r="3.200" fill="#3f86b0"/><path d="M8 8l2 0 1 2-2 1z" fill="#7ec26a"/></svg></button>
    <button aria-label="Outline"><svg width="10" height="10" viewBox="0 0 10 10"><path d="M0 1.500h6M2 3.500h7M4 6.500h5M2 8.500h7" stroke="#777" stroke-dasharray="3 1"/></svg></button>
    <button aria-label="Draft"><svg width="11" height="10" viewBox="0 0 11 10"><path d="M0 .5h11M0 3.500h11M0 6.500h11M0 9.500h11" stroke="#666"/></svg></button>
  </div>
  <span class="pct">100%</span>
  <button class="z" aria-label="Zoom out"><svg width="16" height="16" viewBox="0 0 16 16"><circle cx="8" cy="8" r="7" fill="#fafafa" stroke="#74787e"/><path d="M4.500 8h7" stroke="#444" stroke-width="1.800"/></svg></button>
  <input type="range" aria-label="Zoom" value="50">
  <button class="z" aria-label="Zoom in"><svg width="16" height="16" viewBox="0 0 16 16"><circle cx="8" cy="8" r="7" fill="#fafafa" stroke="#74787e"/><path d="M4.500 8h7M8 4.500v7" stroke="#444" stroke-width="1.800"/></svg></button>
</footer>

<div class="xp">
  <button class="start"><svg width="22" height="22"><use href="#flag"/></svg>start</button>
  <button class="task"><svg><use href="#folder"/></svg>Research and Analysis</button>
  <button class="task on"><svg><use href="#word"/></svg>ICT Questionnaire - ...</button>
  <button class="task"><svg><use href="#ie"/></svg>colour palette - Googl...</button>
  <button class="task"><svg><use href="#ie"/></svg>http://www.google.c...</button>
  <div class="tray"><svg><use href="#shield"/></svg><svg><use href="#speaker"/></svg><svg><use href="#net"/></svg><span>11:16</span></div>
</div>
<script src="script.js"></script>
</body>
</html>
```

FILE: styles.css
```css
* { box-sizing: border-box; }
body {
  margin: 0; height: 100vh; overflow: hidden;
  display: flex; flex-direction: column;
  font: 11px/14px "Noto Sans", "Open Sans", sans-serif; color: #3b3b3b;
}
button { font: inherit; color: inherit; background: none; border: 0; padding: 0; margin: 0; white-space: nowrap; }
input, select { font: inherit; margin: 0; border-radius: 0; }
svg { display: block; flex: none; }
h1, h2, h3, h4, h5, p, ul, ol, figure { margin: 0; padding: 0; font-weight: 400; }
ul, ol { list-style: none; }
.defs { position: absolute; width: 0; height: 0; }
.dd { display: inline-block; border: 3px solid transparent; border-top: 4px solid #6a6a6a; border-bottom: 0; vertical-align: middle; }
.tri-up { border: 5px solid transparent; border-bottom: 5px solid #444; border-top: 0; }
.tri-down { border: 5px solid transparent; border-top: 5px solid #444; border-bottom: 0; }

/* title bar */
.titlebar { flex: none; height: 28px; display: grid; grid-template-columns: 1fr auto 1fr; background: linear-gradient(#ebecef, #e4e7ea); }
.titlebar h1 { font-size: 12px; line-height: 30px; }
.qat { display: flex; align-items: center; gap: 6px; padding: 0 0 4px 1px; }
.qat-line { width: 1px; height: 13px; background: #8d9299; }
.qat button { margin: 0 1px; }
.winbtns { display: flex; justify-content: flex-end; align-items: center; gap: 13px; padding: 0 6px 2px 0; }

/* tabs */
.tabs { flex: none; height: 24px; display: flex; align-items: stretch; background: linear-gradient(#e4e7ea, #dfe3e6); border-bottom: 1px solid #a9adb3; }
.tabs > button { padding: 0 13px; }
.tabs .file { width: 56px; padding: 0; margin-right: 4px; color: #fff; font-weight: 600; border: 1px solid #1b4a94; border-radius: 3px 3px 0 0; background: linear-gradient(#4d86d3, #1c4d9f 55%, #2f6fc4); }
.tabs .on { background: #fff; border: 1px solid #a9adb3; border-bottom: 0; border-radius: 3px 3px 0 0; padding: 0 12px; margin: 0 1px -1px; }
.help { margin-left: auto; display: flex; align-items: center; gap: 8px; padding-right: 3px; }

/* ribbon */
.ribbon { flex: none; height: 86px; display: grid; grid-template-columns: 120px 318px 157px 282px 338px 1fr; background: linear-gradient(#fff 30%, #f7f8f9 70%, #eceff2); border-bottom: 1px solid #8b9098; }
.group { position: relative; display: grid; grid-template-columns: 1fr auto; grid-template-rows: 68px 17px; border-right: 1px solid #b6babf; min-width: 0; }
.tools { grid-column: 1 / 3; display: flex; padding-top: 2px; }
.group h2 { font-size: 11px; line-height: 17px; text-align: center; color: #6a7077; }
.launch { width: 18px; padding-left: 5px; }
.big { display: flex; flex-direction: column; align-items: center; padding-top: 3px; line-height: 13px; flex: none; }
.big > svg { margin-bottom: 3px; }
.big > .dd { margin-top: 5px; }
.off { color: #9a9a9a; }
.off .dd { border-top-color: #b5b5b5; }
.themes { border-right-color: #e2e4e7; }
.themes .big { width: 47px; padding-left: 1px; }
.setup .tools { padding-left: 5px; }
.bg .tools, .arrange .tools { padding-left: 5px; }
.w42 { width: 42px; } .w44 { width: 44px; } .w46 { width: 46px; } .w50 { width: 50px; }
.w52 { width: 52px; } .w57 { width: 57px; } .w60 { width: 60px; } .w62 { width: 62px; } .w66 { width: 66px; }
.stack { display: flex; flex-direction: column; padding-left: 2px; }
.stack button { height: 22px; display: flex; align-items: center; gap: 4px; }
.fields { display: grid; grid-template-columns: 22px 34px 71px; grid-auto-rows: 22px; align-items: center; padding-left: 6px; border-right: 1px solid #e2e4e7; padding-right: 5px; }
.fields h3 { grid-column: 1 / 4; font-size: 11px; }
.fields svg { margin-left: 2px; }
.fields.sp { grid-template-columns: 25px 38px 71px; border: 0; padding: 0 0 0 5px; }
.spin { display: flex; align-items: center; height: 22px; border: 1px solid #c5c9ce; background: #fff; }
.spin input { border: 0; outline: 0; width: 58px; padding: 0 1px; color: #000; background: none; }
.ud { width: 7px; height: 13px; position: relative; }
.ud::before, .ud::after { content: ""; position: absolute; left: 0; border: 3px solid transparent; }
.ud::before { top: 0; border-bottom: 3px solid #333; border-top: 0; }
.ud::after { bottom: 0; border-top: 3px solid #333; border-bottom: 0; }

/* colours drop-down */
.colors-wrap { position: relative; height: 22px; }
.colors { height: 22px; width: 67px; display: flex; align-items: center; gap: 4px; padding-left: 2px; border: 1px solid #c29b29; border-radius: 3px; background: linear-gradient(#fbd96c, #ffe58c); }
.colors .dd { margin-left: 1px; }
.menu { position: absolute; left: 0; top: 23px; z-index: 5; width: 204px; background: #fff; border: 1px solid #a7abb0; box-shadow: 3px 3px 4px rgba(60, 60, 90, .3); }
.menu-main { display: flex; padding-right: 1px; }
#schemes { flex: 1; }
#schemes button { display: flex; align-items: center; height: 20px; width: 100%; padding-left: 5px; }
.sw { width: 12px; height: 12px; border: 1px solid #7f7f7f; margin-right: 1px; }
#schemes span { margin-left: 12px; }
.menu-scroll { width: 16px; display: flex; flex-direction: column; background: #f6f6f6; }
.menu-scroll button { height: 17px; display: grid; place-items: center; border: 1px solid #b4b8bd; border-radius: 2px; background: linear-gradient(90deg, #fff, #e6e7ea); }
.menu-scroll .tri-up { border-bottom-color: #39456b; } .menu-scroll .tri-down { border-top-color: #39456b; }
.menu-thumb, .thumb { display: flex; flex-direction: column; justify-content: center; align-items: center; gap: 2px; border: 1px solid #a9adb3; border-radius: 2px; background: linear-gradient(90deg, #fafafa, #dfe1e4); }
.menu-thumb { height: 212px; margin-top: auto; margin-bottom: 48px; }
.menu-thumb i, .thumb i { width: 8px; height: 1px; background: #777; }
.create { width: 100%; height: 24px; border-top: 1px solid #dcdfe3; border-bottom: 1px solid #dbe5ee; text-align: left; padding-left: 25px; display: flex; align-items: center; }
.create span { border-left: 1px solid #e2e4e7; padding-left: 8px; line-height: 22px; }
.grip { height: 8px; display: flex; justify-content: center; align-items: center; gap: 3px; background: #fbfbfb; }
.grip i { width: 2px; height: 2px; background: #b1b7c4; }

/* work area */
.work { flex: 1; min-height: 0; display: flex; background: linear-gradient(#cdd0d4, #b9bcc0); border-bottom: 1px solid #8a8e94; }
.left { width: 24px; padding-top: 3px; display: flex; flex-direction: column; }
.tabsel { height: 24px; flex: none; display: grid; place-items: center; border: 1px solid #8e949b; background: #d3d6da; }
.vruler { flex: 1; min-height: 0; width: 14px; margin-left: 5px; overflow: hidden; background: #f6f7f8; border: solid #8a929b; border-width: 0 1px; }
.center { flex: 1; min-width: 0; display: flex; flex-direction: column; align-items: center; overflow: hidden; }
.hruler { flex: none; height: 27px; padding-top: 8px; width: 797px; }
.hruler svg { overflow: visible; }
.vruler text, .hruler text { font: 10px "Noto Sans", sans-serif; fill: #555; text-anchor: middle; }
.page { flex: 1; width: 795px; min-height: 0; overflow: hidden; background: #fff; padding: 0 96px; box-shadow: 3px 0 6px rgba(70, 75, 85, .55), -1px 0 2px rgba(70, 75, 85, .5); }
.doc { margin-top: -5px; font: 14px/21px Lato, Carlito, sans-serif; color: #000; padding-left: 24px; }
.doc .q { display: flex; }
.doc .n { width: 24px; }
.doc ul { padding-left: 48px; }
.doc ul li { display: flex; align-items: center; padding-left: 24px; }
.doc ul li::before { content: ""; width: 6px; height: 6px; border-radius: 3px; background: #000; margin: 0 18px 0 -24px; }
mark { background: #b3c7e8; color: #1d2d4f; }

.vscroll { width: 17px; display: flex; flex-direction: column; align-items: center; background: linear-gradient(90deg, #e2e4e8, #d5d8dd); padding: 5px 0 1px; }
.split { width: 9px; height: 2px; background: #6d737b; flex: none; margin-bottom: 2px; }
.vscroll button { height: 17px; flex: none; display: grid; place-items: center; }
.vscroll .rt { width: 17px; border: 1px solid #8e949b; background: #e9ebee; }
.vscroll i[class^="tri"] { border-left-width: 4px; border-right-width: 4px; }
.track { flex: 1; width: 15px; padding-top: 110px; }
.thumb { height: 82%; min-height: 20px; }

/* inserted screenshot */
.shot { margin-top: 105px; width: 601px; height: 481px; display: flex; flex-direction: column; font: 5px/7px "Noto Sans", sans-serif; color: #222; background: #fff; border-left: 1px solid #aaa894; }
.shot button { display: flex; align-items: center; }
.ie-title { height: 12px; display: flex; align-items: center; gap: 2px; padding: 0 1px; color: #fff; background: linear-gradient(#0a5be8, #0553dd 60%, #0a62f0); }
.ie-title b { margin-right: auto; font-size: 6px; }
.ie-title button { width: 9px; height: 9px; justify-content: center; border: 1px solid #9db9f3; border-radius: 1px; background: #3d78ea; }
.ie-title .x { background: #e0512f; }
.ie-addr { height: 15px; display: flex; align-items: center; gap: 3px; padding: 0 3px 0 2px; background: #eceadb; }
.ie-addr > button { width: 10px; height: 10px; justify-content: center; border: 1px solid #cdd3da; background: #f4f6f8; }
.url, .search { height: 11px; display: flex; align-items: center; gap: 3px; padding: 0 2px; border: 1px solid #a9bdd3; background: #fff; }
.url { flex: 1; margin-right: -2px; color: #888; } .url b { color: #222; font-weight: 400; }
.mini-dd { margin-left: auto; width: 6px; height: 7px; background: #b9d0f8; border: 1px solid #b9d0f8; }
.mini-dd::before { content: ""; display: block; margin-top: 2px; border: 2px solid transparent; border-top: 2px solid #27468c; border-bottom: 0; }
.search { width: 120px; margin-left: 3px; }
.search span { margin-left: 1px; }
.mini-tri { border: 1px solid transparent; border-top: 2px solid #222; border-bottom: 0; margin: 0 2px; }
.ie-fav { height: 15px; display: flex; align-items: center; gap: 3px; padding-left: 2px; background: #eeecdf; }
.vl { width: 1px; height: 10px; background: #c6c3b4; margin: 0 1px; }
.dim { color: #8a8a80; }
.ie-tabs { height: 14px; display: flex; align-items: flex-end; background: linear-gradient(#eeecdf, #e3e0d0); border-bottom: 1px solid #8c897c; }
.ie-tab { width: 142px; height: 12px; margin-left: 1px; padding-left: 2px; display: flex; align-items: center; gap: 2px; background: linear-gradient(#eef4fc, #bcd1ee); border: 1px solid #a9b9cf; border-bottom: 0; }
.ie-newtab { width: 14px; height: 10px; border: 1px solid #b7c3d2; border-bottom: 0; background: #dfe8f1; }
.ie-cmds { margin-left: auto; display: flex; align-items: center; gap: 2px; height: 12px; padding-right: 1px; }
.ie-cmds .gap { width: 6px; }
.ie-cmds svg { margin-left: 2px; }
.site-head { height: 28px; padding: 0 80px; display: flex; justify-content: space-between; align-items: flex-start; border-bottom: 2px solid #d6efc2; }
.logo { display: flex; align-items: center; padding-top: 7px; font: 600 9px/12px "Open Sans", sans-serif; color: #a3cf3a; }
.logo b { color: #888; font-weight: 600; }
.site-btns { display: flex; gap: 4px; padding-top: 6px; }
.site-btns button { font: 6px/8px "Liberation Sans", sans-serif; gap: 2px; height: 11px; padding: 0 2px; background: #f3f3f3; border-bottom: 1px solid #ddd; color: #555; }
.site-body { flex: 1; display: flex; padding: 0 74px 0 75px; }
.palette { width: 128px; padding: 7px 9px 0 9px; border-left: 1px solid #f3f3f3; font-family: "DejaVu Sans", sans-serif; }
.pal-list { height: 249px; display: flex; flex-direction: column; justify-content: space-between; }
.pal-list button { height: 15px; width: 108px; gap: 4px; padding-left: 2px; background: linear-gradient(#f0f0f0, #ebebeb); border: 1px solid #e2e2e2; border-right-color: #ccc; border-bottom-color: #ccc; color: #333; }
.pal-list svg { width: 8px; height: 8px; }
.palette p { text-align: center; padding-top: 6px; white-space: nowrap; font-family: "Noto Sans", sans-serif; }
.canvas { flex: 1; background: #f9f9f9; padding: 20px 17px 0 21px; }
.form { height: 300px; border: 2px solid #c6c6c6; border-radius: 2px; background: #fff; display: flex; flex-direction: column; }
.f-head { height: 38px; background: #eff8ff; padding: 3px 1px 0; font-family: "DejaVu Sans", sans-serif; }
.f-head h4 { font: bold 11px/14px "Liberation Sans", sans-serif; color: #777; text-align: center; }
.lang { text-align: right; font-weight: 700; color: #000; line-height: 8px; }
.lang a { color: #00e; }
.eng { margin-top: -3px; padding-left: 1px; line-height: 8px; color: #000; }
.f-page { height: 14px; flex: none; display: flex; align-items: center; gap: 1px; padding: 0 3px 0 1px; background: #f1fdf1; color: #d33; font-family: "DejaVu Sans", sans-serif; font-weight: 700; }
.f-page svg { width: 7px; height: 7px; }
.f-page label { margin-right: 1px; }
.f-page select, .f-bar select {
  height: 9px; padding: 0 8px 0 1px; border: 1px solid #9fb6d6; color: #222; appearance: none; font-weight: 400;
  background: conic-gradient(from 315deg at 50% 100%, #27468c 90deg, transparent 0) right 1px center / 4px 2px no-repeat, linear-gradient(#b9d0f8, #b9d0f8) right / 6px no-repeat #fff;
}
.f-page select { margin-right: auto; width: 15px; font-size: 6px; }
.f-field { margin: 17px 9px 8px 4px; display: flex; flex-direction: column; }
.f-field label, .f-q h5 { font: bold 7px/10px "Liberation Sans", sans-serif; color: #dc4040; }
.f-field small, .f-q small, .o { font: 6px/8px "Liberation Sans", sans-serif; color: #888; }
.f-field input { height: 10px; margin-top: 7px; border: 1px solid #ddd; border-top: 2px solid #aaa; border-left-color: #888; padding: 0; }
.f-bar { height: 12px; width: 87px; margin: 2px 0 0 13px; display: flex; align-items: center; gap: 4px; padding-left: 3px; background: #ffffdf; }
.f-bar b { font: 9px/12px "Noto Sans", sans-serif; color: #555; }
.f-bar svg { width: 8px; height: 8px; }
.f-bar select { margin-left: 6px; width: 30px; }
.f-q { position: relative; margin: 1px 5px 0 4px; height: 81px; flex: none; background: #ffffdf; padding-top: 3px; }
.f-q small { display: block; height: 14px; }
.pm { position: absolute; left: -14px; top: 16px; width: 14px; height: 22px; padding: 2px; display: flex; flex-direction: column; gap: 4px; background: #ffffdf; }
.pm svg { width: 7px; height: 7px; }
.o { display: flex; align-items: center; gap: 2px; height: 12px; }
.o input { appearance: none; width: 7px; height: 7px; border: 1px solid #3f6c9c; background: #f2f5f8; margin-left: 1px; }
.caret { width: 1px; height: 7px; background: #333; }
.end { margin-top: auto; }
.site-foot { height: 22px; border-top: 2px solid #d6efc2; }
.ie-status { height: 11px; display: flex; align-items: center; gap: 4px; padding: 0 8px 0 1px; border-top: 1px solid #8c897c; background: #ebe8d9; }
.ie-status span { display: flex; align-items: center; gap: 2px; }
.cells { margin-left: auto; width: 44px; height: 8px; border: solid #d5d2c2; border-width: 0 1px; }
.zone { margin: 0 42px 0 20px; }

/* XP taskbar */
.xp { flex: none; height: 30px; display: flex; align-items: stretch; gap: 1px; font: 11px/14px "Noto Sans", sans-serif; color: #fff; background: linear-gradient(#3f8cf3, #2158d6 15%, #225ddc 85%, #1941a5); }
.xp .start { width: 97px; margin-right: 8px; display: flex; align-items: center; gap: 3px; padding-left: 8px; font: italic bold 16px/20px "Open Sans", sans-serif; text-shadow: 1px 1px 1px #1a3d14; border-radius: 0 9px 9px 0; background: linear-gradient(#5fb75b, #379435 20%, #3a9a38 75%, #2a7528); box-shadow: inset -3px 0 4px #23651f; }
.task { width: 159px; height: 25px; margin-top: 3px; display: flex; align-items: center; gap: 4px; padding-left: 9px; border-radius: 3px; background: linear-gradient(#5a9bf8, #3a80f2 20%, #377cf0); }
.task svg { width: 16px; height: 16px; }
.task.on { background: #1d4fb6; box-shadow: inset 1px 1px 2px #123580; padding-left: 11px; }
.tray { margin-left: auto; display: flex; align-items: center; gap: 4px; padding: 0 14px 0 12px; border-left: 1px solid #0c3f9e; background: linear-gradient(#26b3f5, #1290e8 20%, #1290e8 80%, #0e72c4); }
.tray svg { width: 14px; height: 14px; }
.tray span { margin-left: 4px; }
.xp.mini { height: 14px; font-size: 5px; line-height: 7px; }
.mini .start { width: 46px; margin-right: 4px; padding-left: 4px; font-size: 8px; line-height: 10px; border-radius: 0 4px 4px 0; }
.mini .task { width: 74px; height: 12px; margin-top: 1px; gap: 2px; padding-left: 4px; }
.mini .task svg { width: 7px; height: 7px; }
.mini .tray { gap: 2px; padding: 0 5px; }
.mini .tray svg { width: 7px; height: 7px; }
.mini .tray span { margin-left: 2px; }

/* status bar */
.status { flex: none; height: 21px; display: flex; align-items: center; background: linear-gradient(#dcdfe2, #c3c6ca); }
.status .cell { height: 19px; display: flex; align-items: center; padding: 0 8px; border-right: 1px solid #9ea2a8; }
.status .cell:first-child { padding-right: 9px; }
.views { margin-left: auto; height: 21px; display: flex; align-items: center; gap: 1px; padding-left: 4px; border-left: 1px solid #9ea2a8; }
.views button { width: 17px; height: 18px; display: grid; place-items: center; }
.views .on { width: 19px; border: 1px solid #c29b29; border-radius: 2px; background: #fde08a; margin-right: 1px; }
.pct { padding: 0 8px 0 10px; }
.status input { appearance: none; width: 100px; height: 18px; background: linear-gradient(#7b8087, #7b8087) center / 100% 1px no-repeat; }
.status input::-webkit-slider-thumb { appearance: none; width: 9px; height: 13px; border: 1px solid #74787e; border-radius: 1px 1px 5px 5px; background: #fafafa; }
.status .z:last-child { margin-right: 4px; }
```

FILE: script.js
```js
const schemes = {
  Elemental: "242852 accbf9 629dd1 297fd5 7f8fa9 4a66ac 5aa2ae 9d90a0",
  Equity: "696464 e9e5dc d34817 9b2d1f a28e6a 956251 918485 855d5d",
  Essential: "d1282e c8c8b1 7a7a7a f5c201 526db0 989aac dc5924 b4b392",
  Executive: "2f5897 e4e9ef 6076b4 9c5252 e68422 846648 63891f 758085",
  Flow: "04617b dbf5f9 0f6fc6 009dd9 0bd0d9 10cf9b 7cca62 a5c249",
  Foundry: "676a55 eaebde 72a376 b0ccb0 a8cdd7 c0beaf cec597 e8b7b7",
  Grid: "534949 ccd1b9 c66951 bf974d 928b70 87706b 94734e 6f777d",
  Hardcover: "895d1d ece9c6 873624 d6862d d0be40 877f6c 972109 aeb795",
  Horizon: "1f2123 dc9e1f 7e97ad cc8e60 7a6a60 b4936d 67787b 9d936f",
  Median: "775f55 ebddc3 94b6d2 dd8047 a5ab81 d8b25c 7ba79d 968c8c",
  Metro: "4e5b6f d6ecff 7fd13b ea157a feb80a 00addc 738ac8 1ab39f",
  Module: "5a6378 d4d4d6 f0ad00 60b5cc e66c7d 6bb76d e88651 c64847",
  Newsprint: "303030 dedee0 ad0101 726056 ac956e 808da9 424e5b 730e00",
  Opulent: "b13f9a f4e7ed b83d68 ac66bb de6c36 f9b639 cf6da4 fa8d3d",
  Oriel: "575f6d fff39d fe8637 7598d9 b32c16 f5cd2d aebad5 777c84",
  Origin: "464653 dde9ec 727ca3 9fb8cd d2da7a fada7a b88472 8e736a",
  Paper: "444d26 fefac9 a5b592 f3a447 e7bc29 d092a7 9c85c0 809ec2",
  Perspective: "283138 ff8600 838d9b d2610c 80716a 94147c 5d5ad2 6f6c7d",
  Pushpin: "465e9c ccddea fda023 aa2b1e 71685c 64a73b eb5605 b9ca1a",
  Slipstream: "212745 b4dcfa 4e67c8 5eccf3 a7ea52 5dceaf ff8021 f14124",
  Solstice: "4f271c e7dec9 3891a7 feb80a c32d2e 84aa33 964305 475a8d",
  Technic: "3b3b3b d4d2d0 6ea0b0 ccaf0a 8d89a4 748560 9e9273 7e848d"
};
document.getElementById("schemes").innerHTML = Object.entries(schemes).map(([name, list]) =>
  `<li><button>${list.split(" ").map(c => `<i class="sw" style="background:#${c}"></i>`).join("")}<span>${name}</span></button></li>`).join("");

// One centimetre at 100% zoom
const CM = 37.8;

function marks(from, to, zero, skip, vertical) {
  let out = "";
  for (let q = from * 4; q <= to * 4; q++) {
    const p = Math.round(zero + q * CM / 4);
    const n = Math.abs(q / 4);
    if (q % 4 === 0) {
      if (q && !skip.includes(n)) out += vertical
        ? `<text transform="translate(10 ${p}) rotate(-90)">${n}</text>`
        : `<text x="${p}" y="10">${n}</text>`;
    } else {
      const h = q % 2 === 0 ? 5 : 1;
      out += vertical
        ? `<rect x="${6 - (h >> 1)}" y="${p}" width="${h + 1}" height="1" fill="#666"/>`
        : `<rect x="${p}" y="${6 - (h >> 1)}" width="1" height="${h + 1}" fill="#666"/>`;
    }
  }
  return out;
}

let stops = "";
for (let x = 240; x < 700; x += 48) stops += `<rect x="${x}" y="14" width="1" height="3" fill="#666"/>`;

document.getElementById("hruler").innerHTML =
  `<svg width="797" height="14"><rect x=".5" y=".5" width="796" height="12" fill="#cdd0d4" stroke="#8a929b"/>
  <rect x="98" y="1" width="600" height="11" fill="#fff"/>${marks(-2.25, 18.25, 97, [16], false)}${stops}
  <path d="M164-3h8v4l-4 4-4-4z" fill="#eee" stroke="#777"/>
  <path d="M188 16V9l4-4 4 4v7zM188 11h8" fill="#eee" stroke="#777"/>
  <path d="M694 11V9l4-4 4 4v2z" fill="#eee" stroke="#777"/></svg>`;

// Number the vertical ruler only as far as the window shows
const vr = document.getElementById("vruler");
const zeroY = -79;
const last = Math.floor((vr.clientHeight - 8 - zeroY) / CM * 4) / 4;
vr.innerHTML = `<svg width="12" height="${vr.clientHeight}">${marks(2.25, last, zeroY, [], true)}</svg>`;
```
